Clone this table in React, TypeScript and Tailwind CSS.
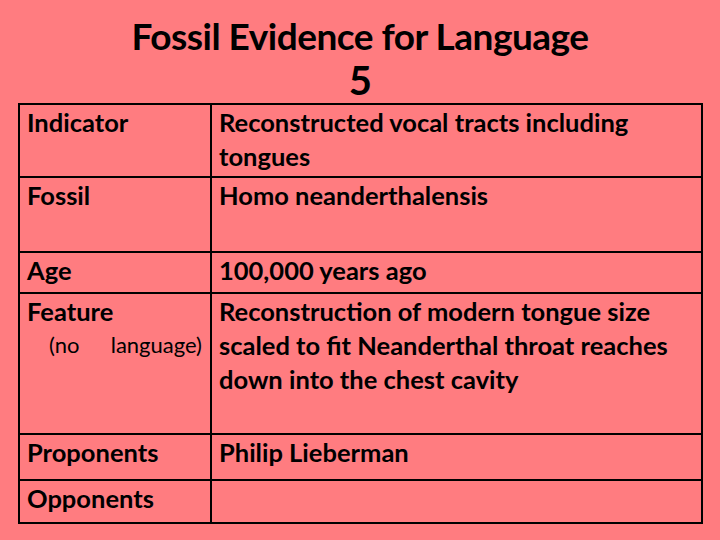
const rows: { label: React.ReactNode; value: React.ReactNode; h: string }[] = [
  { label: "Indicator", value: "Reconstructed vocal tracts including tongues", h: "h-[73px]" },
  { label: "Fossil", value: "Homo neanderthalensis", h: "h-[75px]" },
  { label: "Age", value: "100,000 years ago", h: "h-[41px]" },
  {
    label: (
      <>
        <div>Feature</div>
        <div className="flex justify-between pl-[22px] pr-[2px] font-normal text-[22px]">
          <span>(no</span>
          <span>language)</span>
        </div>
      </>
    ),
    value: "Reconstruction of modern tongue size scaled to fit Neanderthal throat reaches down into the chest cavity",
    h: "h-[141px]",
  },
  { label: "Proponents", value: "Philip Lieberman", h: "h-[46px]" },
  { label: "Opponents", value: "", h: "h-[41px]" },
];

export default function App() {
  return (
    <div className="w-[720px] h-[540px] bg-[#ff7c80] text-black font-['Lato','Open_Sans',sans-serif] overflow-hidden">
      <h1 className="pt-[14px] text-center font-bold text-[37px] leading-[44px] tracking-[-0.5px]">
        Fossil Evidence for Language
        <br />
        <span className="text-[40px]">5</span>
      </h1>
      <div className="ml-[18px] w-[685px] border-2 border-black">
        {rows.map((r, i) => (
          <div
            key={i}
            className={`flex ${r.h} ${i < rows.length - 1 ? "border-b-2 border-black" : ""}`}
          >
            <div className="w-[192px] shrink-0 border-r-2 border-black pl-[7px] pr-[6px] font-bold text-[25.5px] leading-[34px]">
              {r.label}
            </div>
            <div className="flex-1 pl-[7px] pr-[6px] font-bold text-[25.5px] leading-[34px]">
              {r.value}
            </div>
          </div>
        ))}
      </div>
    </div>
  );
}
